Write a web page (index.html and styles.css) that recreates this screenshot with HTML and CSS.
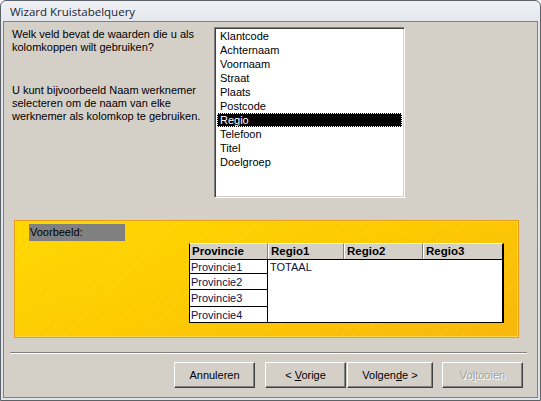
FILE: index.html
```html
<!DOCTYPE html>
<html>
<head>
<meta charset="utf-8">
<link rel="stylesheet" href="styles.css">
</head>
<body>
<div class="window">
  <div class="titlebar">Wizard Kruistabelquery</div>
  <div class="client">
    <div class="top">
      <div class="desc">
        <p class="p1">Welk veld bevat de waarden die u als kolomkoppen wilt gebruiken?</p>
        <p class="p2">U kunt bijvoorbeeld Naam werknemer selecteren om de naam van elke werknemer als kolomkop te gebruiken.</p>
      </div>
      <div class="listbox">
        <div class="item">Klantcode</div>
        <div class="item">Achternaam</div>
        <div class="item">Voornaam</div>
        <div class="item">Straat</div>
        <div class="item">Plaats</div>
        <div class="item">Postcode</div>
        <div class="item selected">Regio</div>
        <div class="item">Telefoon</div>
        <div class="item">Titel</div>
        <div class="item">Doelgroep</div>
      </div>
    </div>
    <div class="panel">
      <div class="label">Voorbeeld:</div>
      <div class="grid">
        <div class="ghead">
          <div class="hc c1">Provincie</div>
          <div class="hc c2">Regio1</div>
          <div class="hc c3">Regio2</div>
          <div class="hc c4">Regio3</div>
        </div>
        <div class="gbody">
          <div class="rowcol">
            <div class="cell r1">Provincie1</div>
            <div class="cell r2">Provincie2</div>
            <div class="cell r3">Provincie3</div>
            <div class="cell r4">Provincie4</div>
          </div>
          <div class="vals">TOTAAL</div>
        </div>
      </div>
    </div>
    <div class="sep"></div>
    <div class="buttons">
      <div class="btn b1"><span>Annuleren</span></div>
      <div class="btn b2"><span>&lt; <u>V</u>orige</span></div>
      <div class="btn b3"><span>Volgen<u>d</u>e &gt;</span></div>
      <div class="btn b4 disabled"><span>Vo<u>l</u>tooien</span></div>
    </div>
  </div>
</div>
</body>
</html>
```
FILE: styles.css
```css
* { box-sizing: border-box; }
html, body { margin: 0; padding: 0; }
body {
  width: 541px;
  height: 401px;
  background: #ffffff;
  font-family: "Liberation Sans", Arial, sans-serif;
  font-size: 11px;
  color: #000;
  overflow: hidden;
}
.window {
  width: 541px;
  height: 401px;
  border: 1px solid #5d6168;
  border-radius: 6px 6px 0 0;
  background: linear-gradient(#eef0f4, #e3e7ed 22px, #dfe3ea);
  padding: 0 2px 2px 2px;
  display: flex;
  flex-direction: column;
}
.titlebar {
  height: 20px;
  padding-left: 7px;
  font-family: "Open Sans", "Liberation Sans", sans-serif;
  font-size: 11.5px;
  line-height: 21px;
  color: #1c2430;
}
.client {
  flex: 1;
  border: 1px solid #7d828a;
  background: #d4d0c8;
  display: flex;
  flex-direction: column;
}
.top {
  display: flex;
  padding: 5px 0 0 8px;
  height: 176px;
}
.desc {
  width: 202px;
  padding-top: 1px;
  line-height: 13px;
}
.desc p { margin: 0; }
.p1 { width: 190px; }
.p2 { margin-top: 30px !important; width: 192px; }
.listbox {
  width: 191px;
  height: 171px;
  background: #fff;
  border: 1px solid;
  border-color: #808080 #fff #fff #808080;
  box-shadow: inset 1px 1px 0 #404040, inset -1px -1px 0 #d4d0c8;
  padding: 1px 1px 0 1px;
}
.item {
  height: 14px;
  line-height: 14px;
  padding-left: 4px;
}
.item.selected {
  background: #000;
  color: #fff;
  margin: 0 1px;
  padding-left: 3px;
  outline: 1px dotted #fff;
  outline-offset: -1px;
}
.panel {
  margin: 22px 0 0 10px;
  width: 505px;
  height: 118px;
  border: 1px solid #f39a12;
  box-shadow: inset 0 0 0 1px #ffd84a;
  background:
    repeating-linear-gradient(-45deg, rgba(255,255,255,0) 0 6px, rgba(255,255,255,0.06) 6px 7px),
    linear-gradient(160deg, #ffd800 0%, #fdca00 50%, #f8b60c 100%);
  padding: 3px 14px;
  display: flex;
  flex-direction: column;
}
.label {
  width: 96px;
  height: 17px;
  background: #808080;
  line-height: 16px;
  padding-left: 1px;
  color: #000;
}
.grid {
  margin-top: 2px;
  margin-left: auto;
  width: 315px;
}
.ghead {
  display: flex;
  height: 17px;
  border-bottom: 1px solid #000;
}
.hc {
  background: #d4d0c8;
  border-top: 1px solid #fff;
  border-left: 1px solid #fff;
  border-right: 1px solid #808080;
  font-weight: bold;
  font-size: 11.5px;
  line-height: 15px;
  padding-left: 2px;
}
.c1 { width: 79px; border-left-color: #000; }
.c2 { width: 76px; }
.c3 { width: 79px; }
.c4 { width: 81px; border-right: 2px solid #000; }
.gbody {
  display: flex;
  height: 63px;
}
.rowcol {
  width: 79px;
  display: flex;
  flex-direction: column;
}
.cell {
  background: #fff;
  border-left: 1px solid #000;
  border-right: 1px solid #000;
  border-bottom: 1px solid #000;
  color: #101048;
  padding-left: 1px;
  display: flex;
  align-items: center;
}
.r1 { height: 14px; }
.r2 { height: 16px; }
.r3 { height: 17px; }
.r4 { height: 16px; }
.vals {
  flex: 1;
  background: #fff;
  border-right: 2px solid #000;
  border-bottom: 1px solid #000;
  color: #101048;
  padding: 1px 0 0 2px;
  line-height: 12px;
}
.sep {
  margin: 14px 0 0 6px;
  width: 517px;
  height: 2px;
  border-top: 1px solid #808080;
  border-bottom: 1px solid #fff;
}
.buttons {
  display: flex;
  justify-content: flex-end;
  margin-top: 8px;
  padding-right: 14px;
}
.btn {
  height: 26px;
  border: 1px solid;
  border-color: #fff #404040 #404040 #fff;
  box-shadow: inset -1px -1px 0 #808080;
  background: #d4d0c8;
  display: flex;
  align-items: center;
  justify-content: center;
  font-size: 11px;
  color: #000;
}
.b1 { width: 81px; }
.b2 { width: 81px; margin-left: 10px; }
.b3 { width: 86px; margin-left: 1px; }
.b4 { width: 81px; margin-left: 9px; }
.disabled {
  color: #a0a0a0;
  text-shadow: 1px 1px 0 #fff;
}
```
